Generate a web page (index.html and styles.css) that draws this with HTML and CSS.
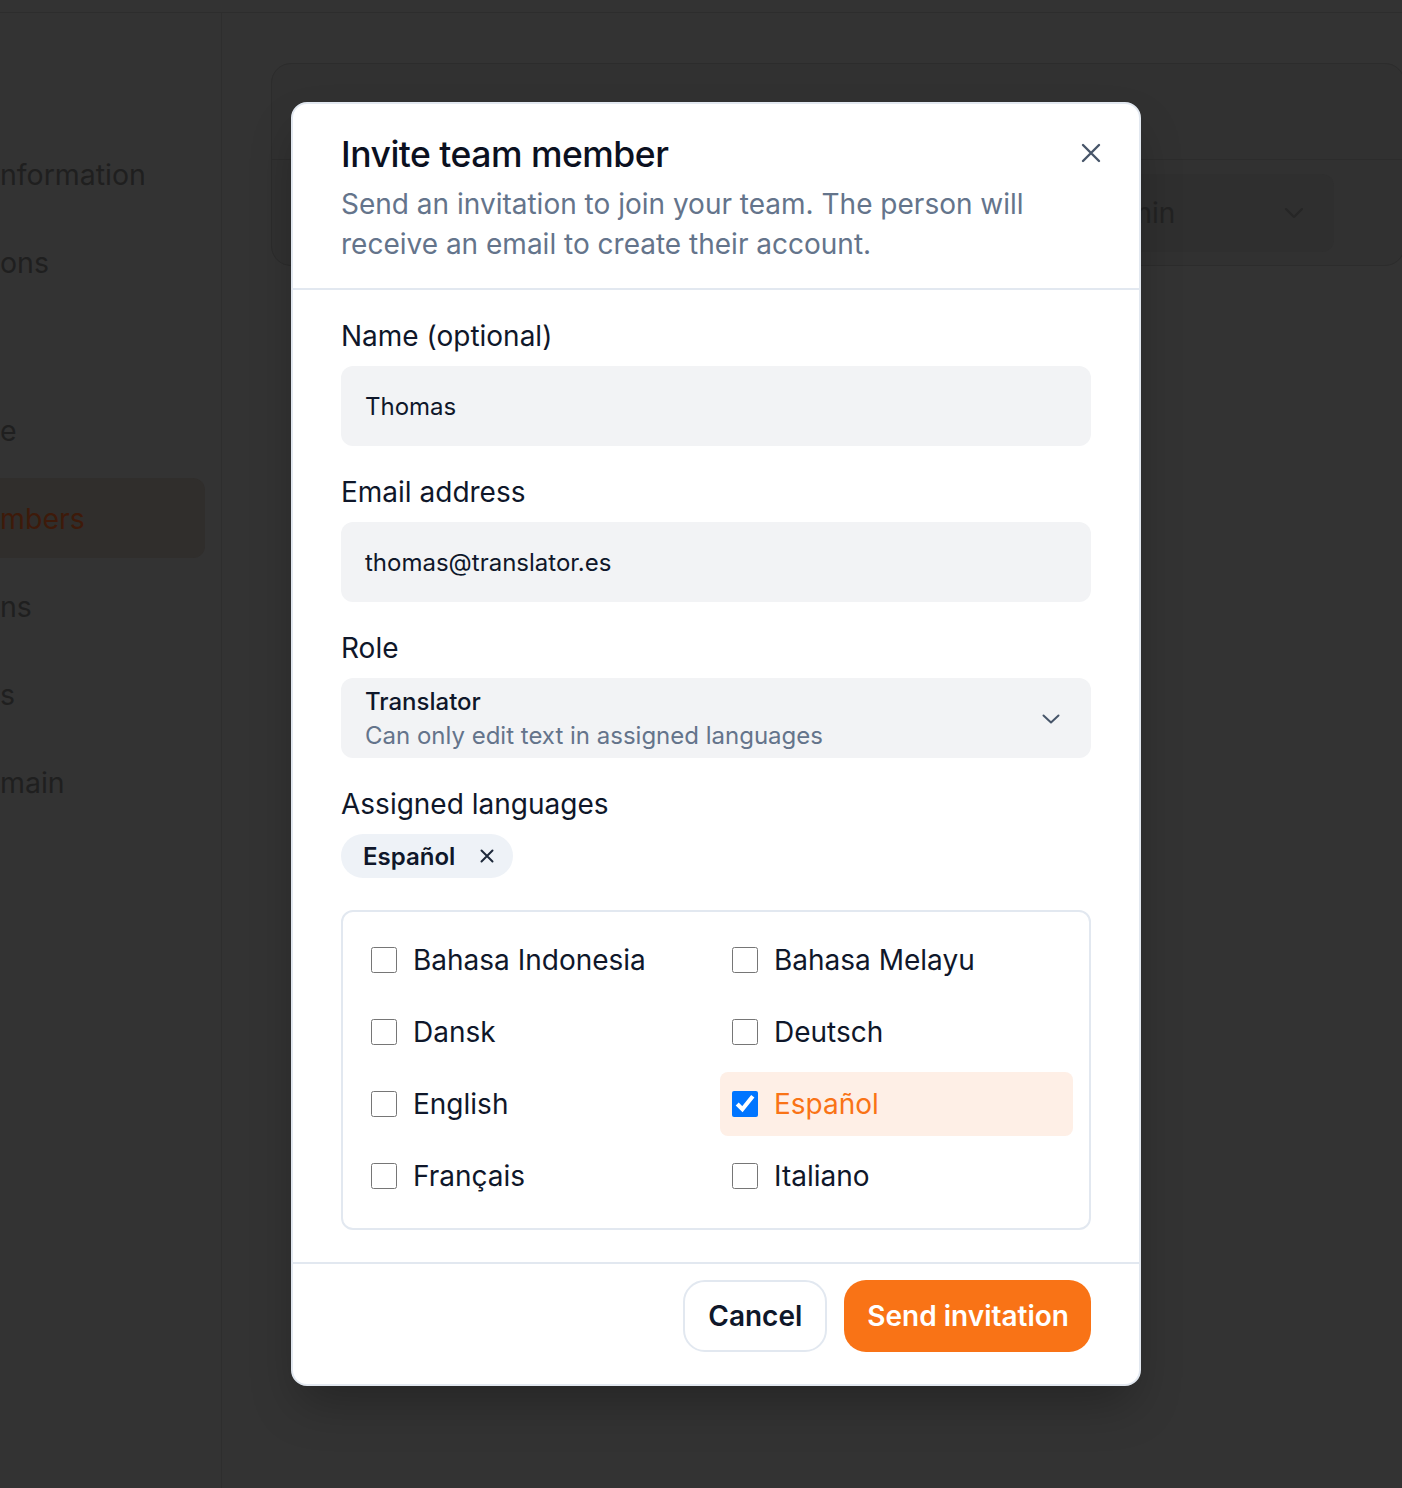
FILE: index.html
```html
<!DOCTYPE html>
<html lang="en">
<head>
<meta charset="utf-8">
<title>Invite team member</title>
<link rel="stylesheet" href="styles.css">
</head>
<body>
<div class="app">
  <div class="topbar"></div>
  <div class="layout">
    <aside class="sidebar">
      <nav class="nav">
        <div class="nav-item">nformation</div>
        <div class="nav-item">ons</div>
        <div class="nav-spacer"></div>
        <div class="nav-item">e</div>
        <div class="nav-item active">mbers</div>
        <div class="nav-item">ns</div>
        <div class="nav-item">s</div>
        <div class="nav-item">main</div>
      </nav>
    </aside>
    <main class="main">
      <section class="card">
        <div class="card-head"></div>
        <div class="card-row">
          <div class="card-cell"></div>
          <div class="bg-select">
            <span>Admin</span>
            <svg width="20" height="12" viewBox="0 0 20 12"><path d="M2 2 L10 10 L18 2" fill="none" stroke="currentColor" stroke-width="2" stroke-linecap="round" stroke-linejoin="round"/></svg>
          </div>
        </div>
      </section>
    </main>
  </div>
</div>

<div class="modal" role="dialog" aria-labelledby="invite-title">
  <header class="modal-head">
    <div class="head-text">
      <h2 class="title" id="invite-title">Invite team member</h2>
      <p class="subtitle">Send an invitation to join your team. The person will receive an email to create their account.</p>
    </div>
    <button class="close" type="button" aria-label="Close">
      <svg width="20" height="20" viewBox="0 0 20 20"><path d="M2 2 L18 18 M18 2 L2 18" fill="none" stroke="currentColor" stroke-width="2.4" stroke-linecap="round"/></svg>
    </button>
  </header>

  <div class="modal-body">
    <div class="field">
      <label class="label">Name (optional)</label>
      <div class="input">Thomas</div>
    </div>
    <div class="field">
      <label class="label">Email address</label>
      <div class="input">thomas@translator.es</div>
    </div>
    <div class="field">
      <label class="label">Role</label>
      <div class="select">
        <div class="select-text">
          <div class="select-main">Translator</div>
          <div class="select-sub">Can only edit text in assigned languages</div>
        </div>
        <svg class="chev" width="18" height="10" viewBox="0 0 18 10"><path d="M1.5 1.5 L9 8.5 L16.5 1.5" fill="none" stroke="currentColor" stroke-width="2" stroke-linecap="round" stroke-linejoin="round"/></svg>
      </div>
    </div>
    <div class="field">
      <label class="label">Assigned languages</label>
      <div class="chips">
        <span class="chip">Español
          <svg width="14" height="14" viewBox="0 0 14 14"><path d="M1.5 1.5 L12.5 12.5 M12.5 1.5 L1.5 12.5" fill="none" stroke="currentColor" stroke-width="2" stroke-linecap="round"/></svg>
        </span>
      </div>
    </div>

    <div class="lang-box">
      <label class="lang"><input type="checkbox"><span>Bahasa Indonesia</span></label>
      <label class="lang"><input type="checkbox"><span>Bahasa Melayu</span></label>
      <label class="lang"><input type="checkbox"><span>Dansk</span></label>
      <label class="lang"><input type="checkbox"><span>Deutsch</span></label>
      <label class="lang"><input type="checkbox"><span>English</span></label>
      <label class="lang checked"><input type="checkbox" checked><span>Español</span></label>
      <label class="lang"><input type="checkbox"><span>Français</span></label>
      <label class="lang"><input type="checkbox"><span>Italiano</span></label>
    </div>
  </div>

  <footer class="modal-foot">
    <button class="btn btn-secondary" type="button">Cancel</button>
    <button class="btn btn-primary" type="button">Send invitation</button>
  </footer>
</div>
</body>
</html>
```

FILE: styles.css
```css
* { box-sizing: border-box; margin: 0; padding: 0; }

html, body { height: 100%; }

body {
  font-family: Inter, "Noto Sans", "Liberation Sans", sans-serif;
  background: #333333;
  width: 1402px;
  height: 1488px;
  overflow: hidden;
  position: relative;
}

/* ---------- dimmed background page ---------- */
.app {
  height: 100%;
  display: flex;
  flex-direction: column;
}

.topbar {
  height: 13px;
  flex: none;
  border-bottom: 1px solid #2d2d2d;
}

.layout {
  flex: 1;
  display: flex;
  min-height: 0;
}

.sidebar {
  width: 222px;
  flex: none;
  border-right: 1px solid #2e2e2e;
  overflow: hidden;
}

.nav {
  display: flex;
  flex-direction: column;
  padding: 117px 16px 0 0;
}

.nav-item {
  height: 80px;
  margin: 4px 0 4px -24px;
  padding-left: 24px;
  display: flex;
  align-items: center;
  font-size: 28.5px;
  color: #1f1f1f;
  border-radius: 12px;
  white-space: nowrap;
}

.nav-item.active {
  background: #302e2c;
  color: #3e1a0a;
}

.nav-spacer { height: 80px; }

.main {
  flex: 1;
  overflow: hidden;
  padding: 50px 0 0 49px;
}

.card {
  width: 1134px;
  border: 1px solid #2c2c2c;
  border-radius: 20px;
  background: #313131;
}

.card-head {
  height: 96px;
  border-bottom: 1px solid #2c2c2c;
}

.card-row {
  display: grid;
  grid-template-columns: 1fr 267px;
  padding: 14px 70px 13px 24px;
}

.bg-select {
  height: 78px;
  border-radius: 12px;
  background: #2f2f2f;
  padding: 0 30px 0 24px;
  display: flex;
  align-items: center;
  justify-content: space-between;
  font-size: 28px;
  color: #222222;
}

.bg-select svg { color: #262626; }

/* ---------- modal ---------- */
.modal {
  position: absolute;
  left: 291px;
  top: 102px;
  width: 850px;
  background: #ffffff;
  border: 2px solid #e2e8f0;
  border-radius: 16px;
  box-shadow: 0 24px 48px -8px rgba(0, 0, 0, 0.28);
  overflow: hidden;
}

.modal-head {
  display: flex;
  align-items: flex-start;
  gap: 16px;
  padding: 31px 38px 24px 48px;
  border-bottom: 2px solid #e2e8f0;
}

.head-text { flex: 1; }

.title {
  font-size: 35.5px;
  line-height: 40px;
  font-weight: 500;
  letter-spacing: -0.5px;
  color: #0b1020;
}

.subtitle {
  margin-top: 9px;
  font-size: 28px;
  line-height: 40px;
  color: #64748b;
}

.close {
  flex: none;
  width: 24px;
  height: 24px;
  margin-top: 6px;
  margin-right: -2px;
  border: 0;
  background: none;
  color: #475569;
  display: flex;
  align-items: center;
  justify-content: center;
}

.modal-body {
  display: flex;
  flex-direction: column;
  padding: 28px 48px 32px;
}

.field {
  display: flex;
  flex-direction: column;
  gap: 12px;
}

.field + .field { margin-top: 28px; }

.label {
  font-size: 28px;
  line-height: 36px;
  color: #0f172a;
}

.input {
  height: 80px;
  border-radius: 12px;
  background: #f2f3f5;
  padding: 0 24px;
  display: flex;
  align-items: center;
  font-size: 24px;
  color: #0f172a;
}

.select {
  height: 80px;
  border-radius: 12px;
  background: #f2f3f5;
  padding: 2px 31px 0 24px;
  display: flex;
  align-items: center;
  justify-content: space-between;
}

.select-main {
  font-size: 24px;
  line-height: 34px;
  font-weight: 500;
  color: #0f172a;
}

.select-sub {
  font-size: 24px;
  line-height: 34px;
  color: #64748b;
}

.chev { color: #475569; }

.chips { display: flex; }

.chip {
  height: 44px;
  border-radius: 22px;
  background: #eef2f7;
  padding: 0 19px 0 22px;
  display: flex;
  align-items: center;
  gap: 25px;
  font-size: 24px;
  font-weight: 600;
  color: #0f172a;
}

.chip svg { color: #1e293b; }

.lang-box {
  margin-top: 32px;
  border: 2px solid #e2e8f0;
  border-radius: 12px;
  padding: 16px 16px 20px;
  display: grid;
  grid-template-columns: 1fr 1fr;
  gap: 8px;
}

.lang {
  height: 64px;
  border-radius: 8px;
  padding: 0 12px;
  display: flex;
  align-items: center;
  gap: 16px;
  font-size: 28px;
  color: #0f172a;
}

.lang input {
  width: 26px;
  height: 26px;
  margin: 0;
  flex: none;
  accent-color: #0075ff;
}

.lang.checked {
  background: #feefe6;
  color: #f97316;
}

.modal-foot {
  display: flex;
  justify-content: flex-end;
  gap: 17px;
  padding: 16px 48px 32px;
  border-top: 2px solid #e2e8f0;
}

.btn {
  height: 72px;
  border-radius: 22px;
  padding: 0 24px;
  font-family: inherit;
  font-size: 28px;
  font-weight: 600;
  cursor: pointer;
}

.btn-secondary {
  background: #ffffff;
  border: 2px solid #e2e8f0;
  color: #0f172a;
  padding: 0 23px;
}

.btn-primary {
  background: #f97316;
  border: 0;
  color: #ffffff;
  padding: 0 22px 0 23px;
}
```
